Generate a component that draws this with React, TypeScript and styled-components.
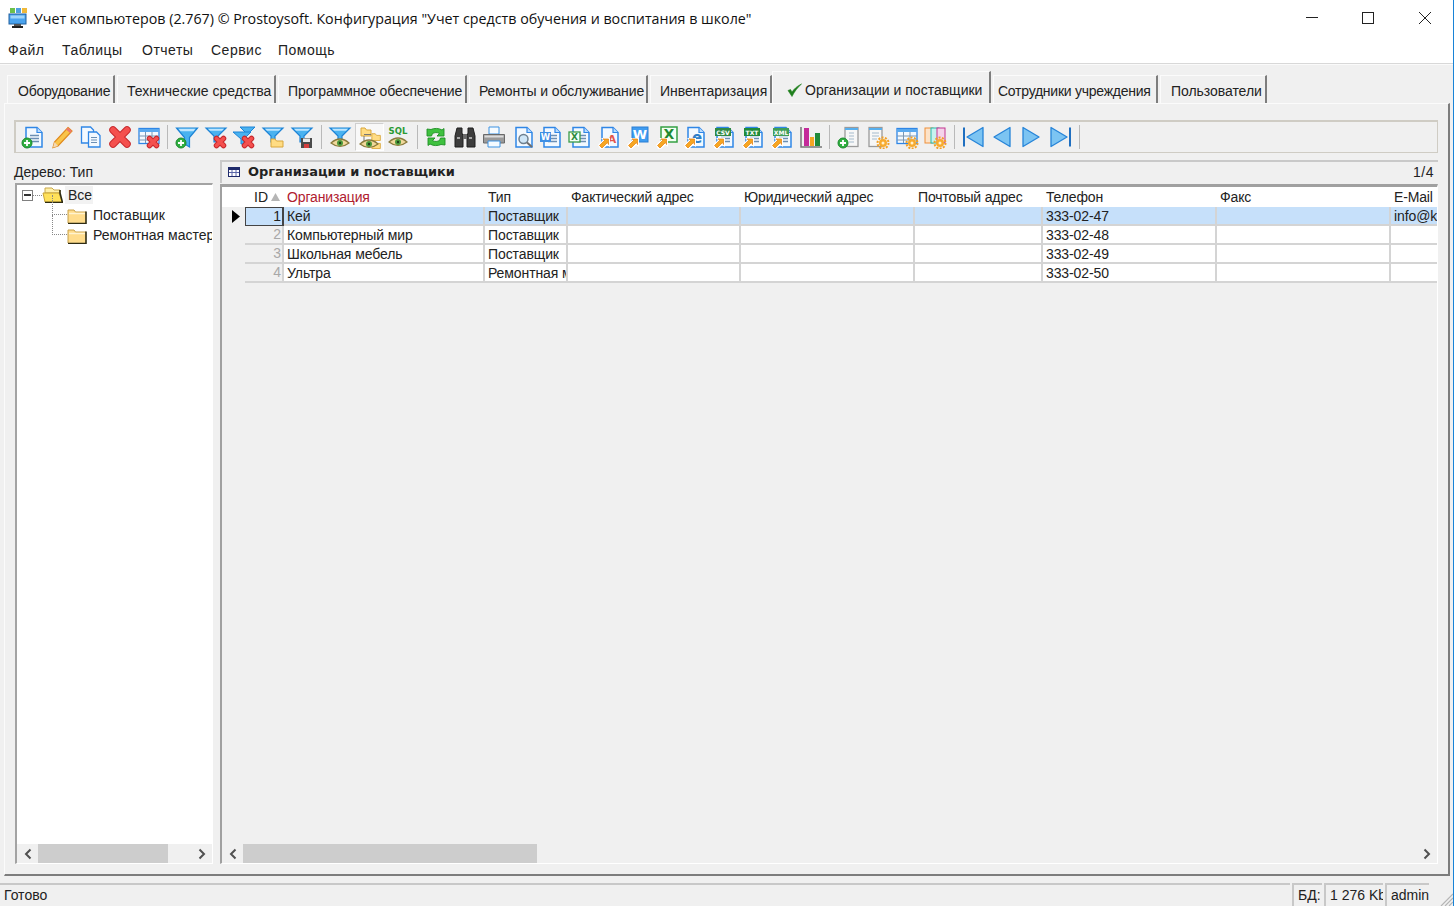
import React from 'react';
import styled, { createGlobalStyle } from 'styled-components';

const GlobalStyle = createGlobalStyle`
  html, body {
    margin: 0;
    padding: 0;
    background: #ffffff;
  }
  * {
    box-sizing: border-box;
  }
`;

const uiFont = `"Liberation Sans", Arial, sans-serif`;
const iconFont = `"DejaVu Sans", sans-serif`;

/* --- icon parts --- */
const Page = ({ c = '#2f86e6' }: { c?: string }) => (
  <>
    <path d="M5 2.500h11l5 5v14.500H5z" fill="#f3f9ff" stroke={c} strokeWidth="1.500" />
    <path d="M16 2.500v5h5" fill="#b9dcff" stroke={c} strokeWidth="1.200" />
  </>
);
const Lines = () => <path d="M9 10.500h9M9 13.500h9M9 16.500h9" stroke="#6c8fb3" strokeWidth="1.300" />;
const Funnel = () => (
  <>
    <path d="M1.500 3h21l-8 9.500V22l-5-3v-6.500z" fill="#49b2f0" stroke="#1d83d6" strokeWidth="1.200" />
    <path d="M3.500 3.800h17l-2 2.400h-13z" fill="#bfe6ff" />
  </>
);
const SmallFunnel = () => (
  <>
    <path d="M2 3h20l-8 8v6h-4v-6z" fill="#49b2f0" stroke="#1d83d6" strokeWidth="1.200" />
    <path d="M4 3.800h16l-2 2h-12z" fill="#bfe6ff" />
  </>
);
const RedX = ({ x = 16, y = 17, s = 4.500, w = 6 }: { x?: number; y?: number; s?: number; w?: number }) => {
  const d = `M${x - s} ${y - s}L${x + s} ${y + s}M${x + s} ${y - s}L${x - s} ${y + s}`;
  return (
    <g>
      <path d={d} stroke="#c8282c" strokeWidth={w} strokeLinecap="round" />
      <path d={d} stroke="#f4504e" strokeWidth={w - 2} strokeLinecap="round" />
    </g>
  );
};
const Plus = ({ x = 6, y = 18 }: { x?: number; y?: number }) => (
  <g>
    <circle cx={x} cy={y} r="5" fill="#2fae3f" stroke="#1b8a2c" />
    <path d={`M${x - 3} ${y}h6M${x} ${y - 3}v6`} stroke="#fff" strokeWidth="1.800" />
  </g>
);
const Eye = ({ y = 18 }: { y?: number }) => (
  <g>
    <path d={`M3 ${y}Q12 ${y - 8} 21 ${y}Q12 ${y + 7} 3 ${y}z`} fill="#f0d89a" stroke="#8a7a3c" strokeWidth="1.200" />
    <circle cx="12" cy={y} r="3" fill="#4d9a3c" />
    <circle cx="12" cy={y} r="1.200" fill="#20401a" />
  </g>
);
const Arrow = () => (
  <g>
    <path d="M1 20l5-5-2-2h9v9l-2.500-2-4.500 4H3z" fill="#ffffff" />
    <path d="M2.500 20.500l5.500-5.500-2-1h5.500v5.500l-1-2-5.500 5.500z" fill="#f6a622" stroke="#e8891a" strokeWidth=".8" />
  </g>
);
const Gear = ({ x = 17, y = 18 }: { x?: number; y?: number }) => (
  <g>
    <circle cx={x} cy={y} r="5.500" fill="none" stroke="#f3a024" strokeWidth="2" strokeDasharray="2 1.400" />
    <circle cx={x} cy={y} r="4" fill="#f8ab2e" />
    <circle cx={x} cy={y} r="1.500" fill="#fff1d0" />
  </g>
);
const FolderMini = ({ x = 0, y = 0, s = 1 }: { x?: number; y?: number; s?: number }) => (
  <g transform={`translate(${x} ${y}) scale(${s})`}>
    <path d="M1 2h4l1.500 2H11v6H1z" fill="#ffdc83" stroke="#d9a63a" />
  </g>
);
const TableGrid = ({ c = '#2f86e6' }: { c?: string }) => (
  <>
    <rect x="2" y="3.500" width="20" height="15" fill="#f3f9ff" stroke={c} strokeWidth="1.300" />
    <path d="M2 4h20v3H2z" fill="#5aa9ee" />
    <path d="M2 11h20M2 15h20M8.500 7v11M15 7v11" stroke="#7c97b2" strokeWidth="1" />
  </>
);
const Letter = ({ x, y, size, fill, children }: { x: number; y: number; size: number; fill: string; children: string }) => (
  <text x={x} y={y} fontFamily={iconFont} fontWeight="700" fontSize={size} fill={fill} textAnchor="middle">
    {children}
  </text>
);
const Badge = ({ label, c }: { label: string; c: string }) => (
  <g>
    <rect x="3" y="3" width="16" height="8" fill={c} />
    <Letter x={11} y={9.500} size={6} fill="#ffffff">{label}</Letter>
  </g>
);

const icons: Record<string, React.ReactNode> = {
  newDoc: (<><Page /><Lines /><Plus /></>),
  edit: (
    <>
      <path d="M18 2.500l4 3.500L8 21l-5 1.500L4.500 17z" fill="#f9c44a" stroke="#e08a1e" strokeWidth="1.200" />
      <path d="M18 2.500l4 3.500-2 2-4-3.500z" fill="#ee7a6a" />
      <path d="M4.500 17L8 21l-5 1.500z" fill="#f3d9b5" />
    </>
  ),
  copy: (
    <>
      <path d="M2.500 2h9l3 3v13h-12z" fill="#f3f9ff" stroke="#2f86e6" strokeWidth="1.300" />
      <path d="M9.500 7h8l3.500 3.500V22H9.500z" fill="#f3f9ff" stroke="#2f86e6" strokeWidth="1.300" />
      <path d="M12 12.500h6M12 15h6M12 17.500h6" stroke="#6c8fb3" />
    </>
  ),
  del: <RedX x={12} y={12} s={7} w={7.500} />,
  delRow: (<><TableGrid /><RedX x={16} y={17} s={3.500} w={5.500} /></>),
  fAdd: (<><Funnel /><Plus x={6} y={18} /></>),
  fDel: (<><SmallFunnel /><RedX x={16} y={17} s={3.500} w={5.500} /></>),
  fDelAll: (
    <>
      <path d="M8 2h15l-6 6h-3z" fill="#49b2f0" stroke="#1d83d6" />
      <path d="M1 7h18l-7 7v5H9v-5z" fill="#49b2f0" stroke="#1d83d6" />
      <RedX x={16} y={17} s={3.500} w={5.500} />
    </>
  ),
  fOpen: (<><SmallFunnel /><path d="M10 14h4l1.500 2H22v6H10z" fill="#ffdc83" stroke="#d9a63a" /></>),
  fSave: (
    <>
      <SmallFunnel />
      <rect x="11" y="13" width="11" height="10" fill="#4b4b4b" />
      <rect x="13" y="13.500" width="7" height="3.500" fill="#e9e9e9" />
      <rect x="14" y="19" width="5" height="4" fill="#d33f3f" />
    </>
  ),
  fEye: (<><SmallFunnel /><Eye y={18} /></>),
  treeEye: (
    <>
      <FolderMini x={3} y={1} />
      <FolderMini x={14} y={7} s={0.85} />
      <FolderMini x={14} y={15} s={0.85} />
      <path d="M7 11v5M7 9.500h7M9 17h5" stroke="#777" />
      <Eye y={19} />
    </>
  ),
  sqlEye: (
    <>
      <Letter x={12} y={9} size={8.500} fill="#2b9a35">SQL</Letter>
      <Eye y={17} />
    </>
  ),
  refresh: (
    <>
      <path d="M3 4l4 .5C10 3 15 3 18 5l2-1.500V11h-7l2.500-2.500c-2.500-1.500-5-1-7 0l-1 2.500H3z" fill="#3fc13f" stroke="#1f8f26" strokeWidth=".9" />
      <path d="M21 20l-4-.5c-3 1.500-8 1.500-11-.5l-2 1.500V13h7l-2.500 2.500c2.500 1.500 5 1 7 0l1-2.500H21z" fill="#3fc13f" stroke="#1f8f26" strokeWidth=".9" />
    </>
  ),
  find: (
    <>
      <path d="M4 3h5v5l1 3v11H2V11zM15 3h5l2 8v11h-8V11l1-3z" fill="#3d3d3d" stroke="#1e1e1e" />
      <path d="M10 9h4v5h-4z" fill="#6a6a6a" />
      <path d="M4 13h3M16 13h3" stroke="#a8a8a8" strokeWidth="2" />
    </>
  ),
  print: (
    <>
      <path d="M7 2h10v7H7z" fill="#f5fbff" stroke="#3d93e3" />
      <path d="M1.500 9.500h21V18h-21z" fill="#9a9a9a" stroke="#6a6a6a" />
      <path d="M2.500 10.500h19v2h-19z" fill="#dcdcdc" />
      <path d="M6 16h12v6H6z" fill="#f5fbff" stroke="#3d93e3" />
    </>
  ),
  preview: (
    <>
      <Page />
      <circle cx="12.500" cy="14" r="4.500" fill="#cfe6f7" stroke="#6d7f8f" strokeWidth="1.500" />
      <path d="M16 17.500l5 4.500" stroke="#6d6d6d" strokeWidth="2" />
    </>
  ),
  word: (
    <>
      <Page />
      <Lines />
      <rect x="1" y="7" width="11" height="10" fill="#3f8fe4" />
      <Letter x={6.500} y={15} size={8.500} fill="#ffffff">W</Letter>
    </>
  ),
  excel: (
    <>
      <Page />
      <Lines />
      <rect x="1" y="7" width="11" height="10" fill="#f5fff5" stroke="#3a9a48" strokeWidth="1.300" />
      <Letter x={6.500} y={15} size={9} fill="#2e8a3c">X</Letter>
    </>
  ),
  pdfOut: (
    <>
      <Page />
      <Letter x={15} y={18} size={11} fill="#e2574c">A</Letter>
      <Arrow />
    </>
  ),
  wordOut: (
    <>
      <rect x="6" y="2" width="16" height="15" fill="#3f9cf0" stroke="#2a7fd4" />
      <Letter x={14} y={14} size={13} fill="#ffffff">W</Letter>
      <Arrow />
    </>
  ),
  excelOut: (
    <>
      <rect x="6" y="2" width="16" height="15" fill="#f3fff3" stroke="#34a043" strokeWidth="1.500" />
      <Letter x={14} y={14} size={14} fill="#1f8a30">X</Letter>
      <Arrow />
    </>
  ),
  ieOut: (
    <>
      <Page />
      <Letter x={14} y={18} size={15} fill="#2f7fc8">e</Letter>
      <Arrow />
    </>
  ),
  csvOut: (<><Page /><Lines /><Badge label="CSV" c="#2f8a45" /><Arrow /></>),
  txtOut: (<><Page /><Lines /><Badge label="TXT" c="#1f8a3a" /><Arrow /></>),
  xmlOut: (<><Page /><Lines /><Badge label="XML" c="#3f9e58" /><Arrow /></>),
  chart: (
    <>
      <path d="M2 2v20h21" stroke="#777" strokeWidth="1.500" fill="none" />
      <rect x="5" y="3" width="5" height="18" fill="#c42a9a" />
      <rect x="11" y="12" width="4" height="9" fill="#f5a623" />
      <rect x="16" y="8" width="5" height="13" fill="#1f8a3a" />
    </>
  ),
  colAdd: (
    <>
      <rect x="8" y="2.500" width="13" height="19" fill="#f7f7f7" stroke="#9a9a9a" strokeWidth="1.300" />
      <path d="M8 3h13v2H8z" fill="#58b0ee" />
      <path d="M12 8h5M12 11h5M12 14h5M12 17h5" stroke="#a6bccd" strokeWidth="1.200" />
      <Plus x={6} y={18} />
    </>
  ),
  colCfg: (
    <>
      <rect x="3" y="2.500" width="13" height="19" fill="#f7f7f7" stroke="#9a9a9a" strokeWidth="1.300" />
      <path d="M3 3h13v2H3z" fill="#58b0ee" />
      <path d="M6 8h7M6 11h7M6 14h5" stroke="#a6bccd" strokeWidth="1.200" />
      <Gear />
    </>
  ),
  tableCfg: (<><TableGrid /><Gear x={17} y={18} /></>),
  multiCfg: (
    <>
      <rect x="2" y="3" width="8" height="15" fill="#fde3c8" stroke="#ee8f3a" />
      <rect x="8" y="3" width="8" height="15" fill="#c8f2ee" stroke="#25b8ad" />
      <rect x="14" y="3" width="8" height="15" fill="#f5d3ea" stroke="#c2358f" />
      <Gear x={17} y={18} />
    </>
  ),
  first: (
    <>
      <path d="M2 2.500v19" stroke="#1f6fc0" strokeWidth="2" />
      <path d="M21 2.500v19L5 12z" fill="#7cc4f2" stroke="#2684d8" strokeWidth="1.300" strokeLinejoin="round" />
    </>
  ),
  prev: <path d="M20 2.500v19L4 12z" fill="#7cc4f2" stroke="#2684d8" strokeWidth="1.300" strokeLinejoin="round" />,
  next: <path d="M4 2.500v19L20 12z" fill="#7cc4f2" stroke="#2684d8" strokeWidth="1.300" strokeLinejoin="round" />,
  last: (
    <>
      <path d="M22 2.500v19" stroke="#1f6fc0" strokeWidth="2" />
      <path d="M3 2.500v19L19 12z" fill="#7cc4f2" stroke="#2684d8" strokeWidth="1.300" strokeLinejoin="round" />
    </>
  ),
};

const toolbarGroups = [
  ['newDoc', 'edit', 'copy', 'del', 'delRow'],
  ['fAdd', 'fDel', 'fDelAll', 'fOpen', 'fSave'],
  ['fEye', 'treeEye', 'sqlEye'],
  ['refresh', 'find', 'print', 'preview', 'word', 'excel', 'pdfOut', 'wordOut', 'excelOut', 'ieOut', 'csvOut', 'txtOut', 'xmlOut', 'chart'],
  ['colAdd', 'colCfg', 'tableCfg', 'multiCfg'],
  ['first', 'prev', 'next', 'last'],
];

const menus = [
  { label: 'Файл', width: 36 },
  { label: 'Таблицы', width: 62 },
  { label: 'Отчеты', width: 51 },
  { label: 'Сервис', width: 49 },
  { label: 'Помощь', width: 61 },
];

const tabs = [
  { label: 'Оборудование', width: 108, pad: 10, spacing: -0.25 },
  { label: 'Технические средства', width: 159, pad: 9, spacing: 0 },
  { label: 'Программное обеспечение', width: 189, pad: 9, spacing: -0.1 },
  { label: 'Ремонты и обслуживание', width: 179, pad: 9, spacing: -0.1 },
  { label: 'Инвентаризация', width: 122, pad: 9, spacing: -0.05 },
  { label: 'Организации и поставщики', width: 219, pad: 14, spacing: 0, active: true },
  { label: 'Сотрудники учреждения', width: 165, pad: 4, spacing: -0.25 },
  { label: 'Пользователи', width: 107, pad: 10, spacing: -0.05 },
];

const columns = [
  { title: 'Организация', width: 201, red: true },
  { title: 'Тип', width: 83 },
  { title: 'Фактический адрес', width: 173 },
  { title: 'Юридический адрес', width: 174 },
  { title: 'Почтовый адрес', width: 128 },
  { title: 'Телефон', width: 174 },
  { title: 'Факс', width: 174 },
  { title: 'E-Mail', width: 46 },
];

const rows = [
  ['Кей', 'Поставщик', '', '', '', '333-02-47', '', 'info@kei.ru'],
  ['Компьютерный мир', 'Поставщик', '', '', '', '333-02-48', '', ''],
  ['Школьная мебель', 'Поставщик', '', '', '', '333-02-49', '', ''],
  ['Ультра', 'Ремонтная мастерская', '', '', '', '333-02-50', '', ''],
];

const Chevron = ({ right }: { right?: boolean }) => (
  <svg width="10" height="12" viewBox="0 0 10 12">
    <path d={right ? 'M2.500 1.500L7 6l-4.500 4.500' : 'M7.500 1.500L3 6l4.500 4.500'} fill="none" stroke="#505050" strokeWidth="2" />
  </svg>
);

const ClosedFolder = () => (
  <svg width="20" height="17" viewBox="0 0 20 17">
    <path d="M1 3h6l1.500 2H19v11H1z" fill="#ffdc8c" />
    <path d="M1 16V3h6l1.500 2H19" fill="none" stroke="#c9a24a" strokeWidth="1" />
    <path d="M19 4.500V16.500H1" fill="none" stroke="#2e2c14" strokeWidth="1.600" />
    <path d="M2 6.500h16" stroke="#fff3cf" strokeWidth="1.500" />
  </svg>
);

const OpenFolder = () => (
  <svg width="21" height="16" viewBox="0 0 21 16">
    <path d="M3 1h7l2 2h6v3H3z" fill="#fff0a8" stroke="#c9a84a" strokeWidth="1" />
    <path d="M1 6h16l3 9H3z" fill="#ffe15a" stroke="#c9a436" strokeWidth="1" />
    <path d="M18 3v3l2.500 9.500H3" fill="none" stroke="#2e2c14" strokeWidth="1.600" />
  </svg>
);

const AppIcon = () => (
  <svg width="22" height="22" viewBox="0 0 22 22">
    <rect x="2" y="1" width="5" height="5" fill="#6cc04a" />
    <rect x="8" y="1" width="5" height="5" fill="#4f9fe0" />
    <rect x="14" y="1" width="5" height="5" fill="#efb93a" />
    <rect x="1" y="7" width="17" height="10" fill="#4aa3ee" stroke="#20609f" />
    <rect x="2.500" y="8.500" width="14" height="3" fill="#9fd5fa" />
    <rect x="6" y="17" width="7" height="2" fill="#555" />
    <rect x="4" y="19" width="11" height="2" fill="#222" />
  </svg>
);

const App: React.FC = () => {
  return (
    <Shell>
      <GlobalStyle />
      <TitleBar>
        <TitleIcon>
          <AppIcon />
        </TitleIcon>
        <TitleText>
          Учет компьютеров (2.767) © Prostoysoft. Конфигурация "Учет средств обучения и воспитания в школе"
        </TitleText>
        <WinButton>
          <svg width="12" height="12" viewBox="0 0 12 12"><path d="M0 5.500h12" stroke="#222" /></svg>
        </WinButton>
        <WinButton>
          <svg width="12" height="12" viewBox="0 0 12 12"><rect x=".5" y=".5" width="11" height="11" fill="none" stroke="#222" /></svg>
        </WinButton>
        <WinButton>
          <svg width="12" height="12" viewBox="0 0 12 12"><path d="M0 0l12 12M12 0L0 12" stroke="#222" /></svg>
        </WinButton>
      </TitleBar>

      <MenuBar>
        {menus.map((m) => (
          <MenuItem key={m.label} $width={m.width}>{m.label}</MenuItem>
        ))}
      </MenuBar>

      <Workspace>
        <TabStrip>
          {tabs.map((t) => (
            <Tab key={t.label} $width={t.width} $pad={t.pad} $spacing={t.spacing} $active={t.active}>
              {t.active && (
                <svg width="15" height="14" viewBox="0 0 15 14">
                  <path d="M1 7.500l2.500-1 1.500 2.500C7 6 10 3 14.500 1 10.500 4.500 7.500 8.500 5 13.500z" fill="#1f7f1c" stroke="#1f7f1c" strokeWidth=".6" />
                </svg>
              )}
              {t.label}
            </Tab>
          ))}
        </TabStrip>

        <TabPanel>
          <Toolbar>
            {toolbarGroups.map((group, i) => (
              <React.Fragment key={i}>
                {group.map((name) => (
                  <ToolButton key={name} $active={name === 'treeEye'}>
                    <svg width="24" height="24" viewBox="0 0 24 24">{icons[name]}</svg>
                  </ToolButton>
                ))}
                <ToolSeparator />
              </React.Fragment>
            ))}
          </Toolbar>

          <Split>
            <TreePane>
              <PaneLabel>Дерево: Тип</PaneLabel>
              <TreeBox>
                <TreeBody>
                  <RootRow>
                    <Expander />
                    <Dash />
                    <OpenFolder />
                    <RootLabel>Все</RootLabel>
                  </RootRow>
                  <ChildRow>
                    <Branch />
                    <ClosedFolder />
                    <ChildLabel>Поставщик</ChildLabel>
                  </ChildRow>
                  <ChildRow>
                    <Branch />
                    <ClosedFolder />
                    <ChildLabel>Ремонтная мастерская</ChildLabel>
                  </ChildRow>
                </TreeBody>
                <ScrollBar>
                  <ScrollArrow><Chevron /></ScrollArrow>
                  <ScrollThumb $width={130} />
                  <ScrollRest />
                  <ScrollArrow><Chevron right /></ScrollArrow>
                </ScrollBar>
              </TreeBox>
            </TreePane>

            <GridPane>
              <GridCaption>
                <svg width="12" height="10" viewBox="0 0 12 10">
                  <rect x=".5" y=".5" width="11" height="9" fill="#fff" stroke="#1f2a6a" />
                  <path d="M1 1h10v2H1z" fill="#1f2a6a" />
                  <path d="M1 5.500h10M4 3v6M8 3v6" stroke="#5a66a8" />
                </svg>
                <CaptionTitle>Организации и поставщики</CaptionTitle>
                <CaptionCount>1/4</CaptionCount>
              </GridCaption>

              <GridBox>
                <GridBody>
                  <HeaderRow>
                    <IndicatorHead />
                    <IdHead>
                      ID
                      <svg width="9" height="8" viewBox="0 0 9 8"><path d="M4.500 0L9 8H0z" fill="#b5b5b5" /></svg>
                    </IdHead>
                    {columns.map((c) => (
                      <HeadCell key={c.title} $width={c.width} $red={c.red}>{c.title}</HeadCell>
                    ))}
                  </HeaderRow>
                  {rows.map((row, i) => (
                    <DataRow key={i} $selected={i === 0}>
                      <Indicator>
                        {i === 0 && <svg width="8" height="13" viewBox="0 0 8 13"><path d="M0 0l8 6.500L0 13z" fill="#000" /></svg>}
                      </Indicator>
                      <IdCell $current={i === 0}>{i + 1}</IdCell>
                      {row.map((v, j) => (
                        <Cell key={j} $width={columns[j].width} $last={j === row.length - 1}>{v}</Cell>
                      ))}
                    </DataRow>
                  ))}
                </GridBody>
                <ScrollBar>
                  <ScrollArrow><Chevron /></ScrollArrow>
                  <ScrollThumb $width={294} />
                  <ScrollRest />
                  <ScrollArrow><Chevron right /></ScrollArrow>
                </ScrollBar>
              </GridBox>
            </GridPane>
          </Split>
        </TabPanel>
      </Workspace>

      <StatusBar>
        <StatusText>Готово</StatusText>
        <StatusCell $width={30}>БД:</StatusCell>
        <StatusCell $width={59}>1 276 Kb</StatusCell>
        <StatusCell $width={44}>admin</StatusCell>
        <Grip>
          <svg width="14" height="14" viewBox="0 0 14 14">
            <path d="M14 2L2 14M14 6L6 14M14 10l-4 4" stroke="#b5b5b5" strokeWidth="1.200" />
          </svg>
        </Grip>
      </StatusBar>
    </Shell>
  );
};

export default App;

const Shell = styled.div`
  width: 1454px;
  height: 906px;
  display: flex;
  flex-direction: column;
  overflow: hidden;
  background: #ffffff;
  border-right: 1px solid #1883d7;
  font-family: ${uiFont};
  color: #222;
`;

const TitleBar = styled.div`
  height: 36px;
  display: flex;
  align-items: center;
  flex: none;
`;

const TitleIcon = styled.div`
  width: 34px;
  padding-left: 8px;
  display: flex;
`;

const TitleText = styled.div`
  flex: 1;
  font-family: "Open Sans", sans-serif;
  font-size: 14.260px;
  color: #111;
  white-space: nowrap;
`;

const WinButton = styled.div`
  width: 56.500px;
  height: 36px;
  display: flex;
  align-items: center;
  justify-content: center;
`;

const MenuBar = styled.div`
  height: 28px;
  flex: none;
  display: flex;
  align-items: center;
  gap: 18px;
  padding: 0 0 0 8px;
  border-bottom: 1px solid #d8d8d8;
`;

const MenuItem = styled.div<{ $width: number }>`
  width: ${(p) => p.$width}px;
  font-size: 14px;
  letter-spacing: 0.5px;
  white-space: nowrap;
  color: #222;
`;

const Workspace = styled.div`
  flex: none;
  height: 819px;
  background: #f0f0f0;
  border-top: 1px solid #fafafa;
  display: flex;
  flex-direction: column;
`;

const TabStrip = styled.div`
  height: 38px;
  flex: none;
  display: flex;
  align-items: flex-end;
  gap: 2px;
  padding-left: 7px;
`;

const Tab = styled.div<{ $width: number; $pad: number; $spacing: number; $active?: boolean }>`
  width: ${(p) => p.$width}px;
  height: ${(p) => (p.$active ? 32 : 28)}px;
  margin: ${(p) => (p.$active ? '0 0 0 -2px' : '0')};
  display: flex;
  align-items: center;
  justify-content: flex-start;
  gap: 3px;
  padding: ${(p) => (p.$active ? 4 : 3)}px 0 0 ${(p) => p.$pad}px;
  font-size: 14px;
  letter-spacing: ${(p) => p.$spacing}px;
  white-space: nowrap;
  overflow: hidden;
  color: #222;
  background: #f0f0f0;
  border-top: 1px solid #fbfbfb;
  border-left: 1px solid #fbfbfb;
  border-right: 2px solid #7d7d7d;
`;

const TabPanel = styled.div`
  height: 773px;
  width: 1446px;
  flex: none;
  margin-left: 4px;
  padding: 16px 10px 10px 9px;
  border-top: 1px solid #fbfbfb;
  border-left: 1px solid #fbfbfb;
  border-right: 2px solid #7d7d7d;
  border-bottom: 2px solid #7d7d7d;
  display: flex;
  flex-direction: column;
`;

const Toolbar = styled.div`
  height: 33px;
  flex: none;
  display: flex;
  align-items: center;
  padding-left: 3px;
  border: 2px solid #cfccc4;
  border-right-width: 1px;
  border-bottom-width: 1px;
`;

const ToolButton = styled.div<{ $active?: boolean }>`
  width: 28.800px;
  height: 28px;
  flex: none;
  display: flex;
  align-items: center;
  justify-content: center;
  background: ${(p) => (p.$active ? '#f8f8f8' : 'transparent')};
  border: 1px solid ${(p) => (p.$active ? '#cfcfcf' : 'transparent')};
  border-right-color: ${(p) => (p.$active ? '#ffffff' : 'transparent')};
  border-bottom-color: ${(p) => (p.$active ? '#ffffff' : 'transparent')};
`;

const ToolSeparator = styled.div`
  width: 9.500px;
  height: 24px;
  flex: none;
  background: linear-gradient(#b9b9b9, #b9b9b9) center / 1px 100% no-repeat;
`;

const Split = styled.div`
  flex: 1;
  min-height: 0;
  display: flex;
  gap: 7px;
  margin-top: 7px;
`;

const TreePane = styled.div`
  width: 199px;
  flex: none;
  display: flex;
  flex-direction: column;
`;

const PaneLabel = styled.div`
  height: 23px;
  flex: none;
  display: flex;
  align-items: center;
  font-size: 14px;
  color: #222;
`;

const TreeBox = styled.div`
  flex: 1;
  min-height: 0;
  display: flex;
  flex-direction: column;
  margin-left: 1px;
  border-top: 2px solid #a3a3a3;
  border-left: 2px solid #a3a3a3;
  border-right: 1px solid #ffffff;
  border-bottom: 1px solid #ffffff;
`;

const TreeBody = styled.div`
  flex: 1;
  min-height: 0;
  background: #ffffff;
  overflow: hidden;
`;

const RootRow = styled.div`
  height: 20px;
  display: flex;
  align-items: center;
  padding-left: 5px;

  svg {
    flex: none;
  }
`;

const Expander = styled.div`
  width: 11px;
  height: 11px;
  flex: none;
  border: 1px solid #808080;
  background: linear-gradient(#333, #333) center / 7px 2px no-repeat;
`;

const Dash = styled.div`
  width: 9px;
  flex: none;
  border-top: 1px dotted #888;
`;

const RootLabel = styled.span`
  font-size: 14px;
  margin-left: 2px;
  padding: 1px 1px 1px 3px;
  background: #f2f2f2;
  color: #222;
`;

const ChildRow = styled.div`
  height: 20px;
  display: flex;
  align-items: center;
  padding-left: 35px;
  white-space: nowrap;

  svg {
    flex: none;
  }
`;

const Branch = styled.div`
  width: 15px;
  height: 20px;
  flex: none;
  margin-top: -20px;
  border-left: 1px dotted #888;
  border-bottom: 1px dotted #888;
`;

const ChildLabel = styled.span`
  font-size: 14px;
  margin-left: 6px;
  color: #222;
`;

const ScrollBar = styled.div`
  height: 19px;
  flex: none;
  display: flex;
  align-items: stretch;
  background: #f0f0f0;
`;

const ScrollArrow = styled.div`
  width: 21px;
  flex: none;
  display: flex;
  align-items: center;
  justify-content: center;
`;

const ScrollThumb = styled.div<{ $width: number }>`
  width: ${(p) => p.$width}px;
  flex: none;
  background: #cdcdcd;
`;

const ScrollRest = styled.div`
  flex: 1;
`;

const GridPane = styled.div`
  flex: 1;
  min-width: 0;
  display: flex;
  flex-direction: column;
`;

const GridCaption = styled.div`
  height: 23px;
  flex: none;
  display: flex;
  align-items: center;
  padding: 0 0 2px 6px;
  border-top: 2px solid #c9c9c9;
  border-left: 2px solid #c9c9c9;
  background: #f0f0f0;
`;

const CaptionTitle = styled.div`
  margin-left: 8px;
  font-family: "DejaVu Sans", sans-serif;
  font-weight: 700;
  font-size: 12.940px;
  color: #222;
`;

const CaptionCount = styled.div`
  margin-left: auto;
  padding-right: 4px;
  font-size: 14px;
  letter-spacing: 0.5px;
  color: #222;
`;

const GridBox = styled.div`
  flex: 1;
  min-height: 0;
  display: flex;
  flex-direction: column;
  margin-top: 1px;
  border-top: 3px solid #a0a0a0;
  border-left: 2px solid #a0a0a0;
  border-right: 1px solid #ffffff;
  border-bottom: 1px solid #ffffff;
`;

const GridBody = styled.div`
  flex: 1;
  min-height: 0;
  overflow: hidden;
`;

const HeaderRow = styled.div`
  height: 20px;
  display: flex;
  background: #ffffff;
`;

const IndicatorHead = styled.div`
  width: 23px;
  flex: none;
`;

const IdHead = styled.div`
  width: 39px;
  flex: none;
  display: flex;
  align-items: center;
  justify-content: flex-end;
  gap: 3px;
  padding-right: 4px;
  font-size: 14px;
  color: #222;
`;

const HeadCell = styled.div<{ $width: number; $red?: boolean }>`
  width: ${(p) => p.$width}px;
  flex: none;
  display: flex;
  align-items: center;
  padding-left: 3px;
  font-size: 14px;
  letter-spacing: -0.15px;
  white-space: nowrap;
  overflow: hidden;
  color: ${(p) => (p.$red ? '#b02030' : '#222')};
`;

const Indicator = styled.div`
  width: 23px;
  flex: none;
  display: flex;
  align-items: center;
  justify-content: center;
  padding-left: 4px;
  background: #f0f0f0;
`;

const IdCell = styled.div<{ $current?: boolean }>`
  width: 39px;
  flex: none;
  text-align: right;
  padding-right: 1px;
  line-height: 17px;
  font-size: 14px;
  color: ${(p) => (p.$current ? '#222' : '#a8a8a8')};
  background: ${(p) => (p.$current ? '#c6e0fa' : '#f0f0f0')};
  border: ${(p) => (p.$current ? '1px solid #444' : '0')};
  border-bottom: ${(p) => (p.$current ? '1px solid #444' : '2px solid #d4d4d4')};
  border-right: 2px solid ${(p) => (p.$current ? '#444' : '#d4d4d4')};
`;

const DataRow = styled.div<{ $selected?: boolean }>`
  height: 19px;
  display: flex;
  background: ${(p) => (p.$selected ? '#c6e0fa' : '#ffffff')};
`;

const Cell = styled.div<{ $width: number; $last?: boolean }>`
  width: ${(p) => p.$width}px;
  flex: none;
  padding: 1px 0 0 3px;
  line-height: 16px;
  font-size: 14px;
  letter-spacing: -0.1px;
  white-space: nowrap;
  overflow: hidden;
  color: #222;
  border-right: ${(p) => (p.$last ? '0' : '2px solid #d4d4d4')};
  border-bottom: 2px solid #d4d4d4;
`;

const StatusBar = styled.div`
  height: 23px;
  flex: none;
  display: flex;
  align-items: stretch;
  gap: 2px;
  background: #f0f0f0;
`;

const StatusText = styled.div`
  flex: 1;
  padding: 0 0 1px 4px;
  display: flex;
  align-items: center;
  font-size: 14px;
  color: #222;
  border-top: 2px solid #c8c8c8;
`;

const StatusCell = styled.div<{ $width: number }>`
  width: ${(p) => p.$width}px;
  flex: none;
  display: flex;
  align-items: center;
  padding: 0 0 1px 4px;
  font-size: 14px;
  white-space: nowrap;
  overflow: hidden;
  color: #222;
  border-top: 2px solid #c8c8c8;
  border-left: 2px solid #c8c8c8;
`;

const Grip = styled.div`
  width: 22px;
  flex: none;
  display: flex;
  align-items: flex-end;
  justify-content: flex-end;
`;
